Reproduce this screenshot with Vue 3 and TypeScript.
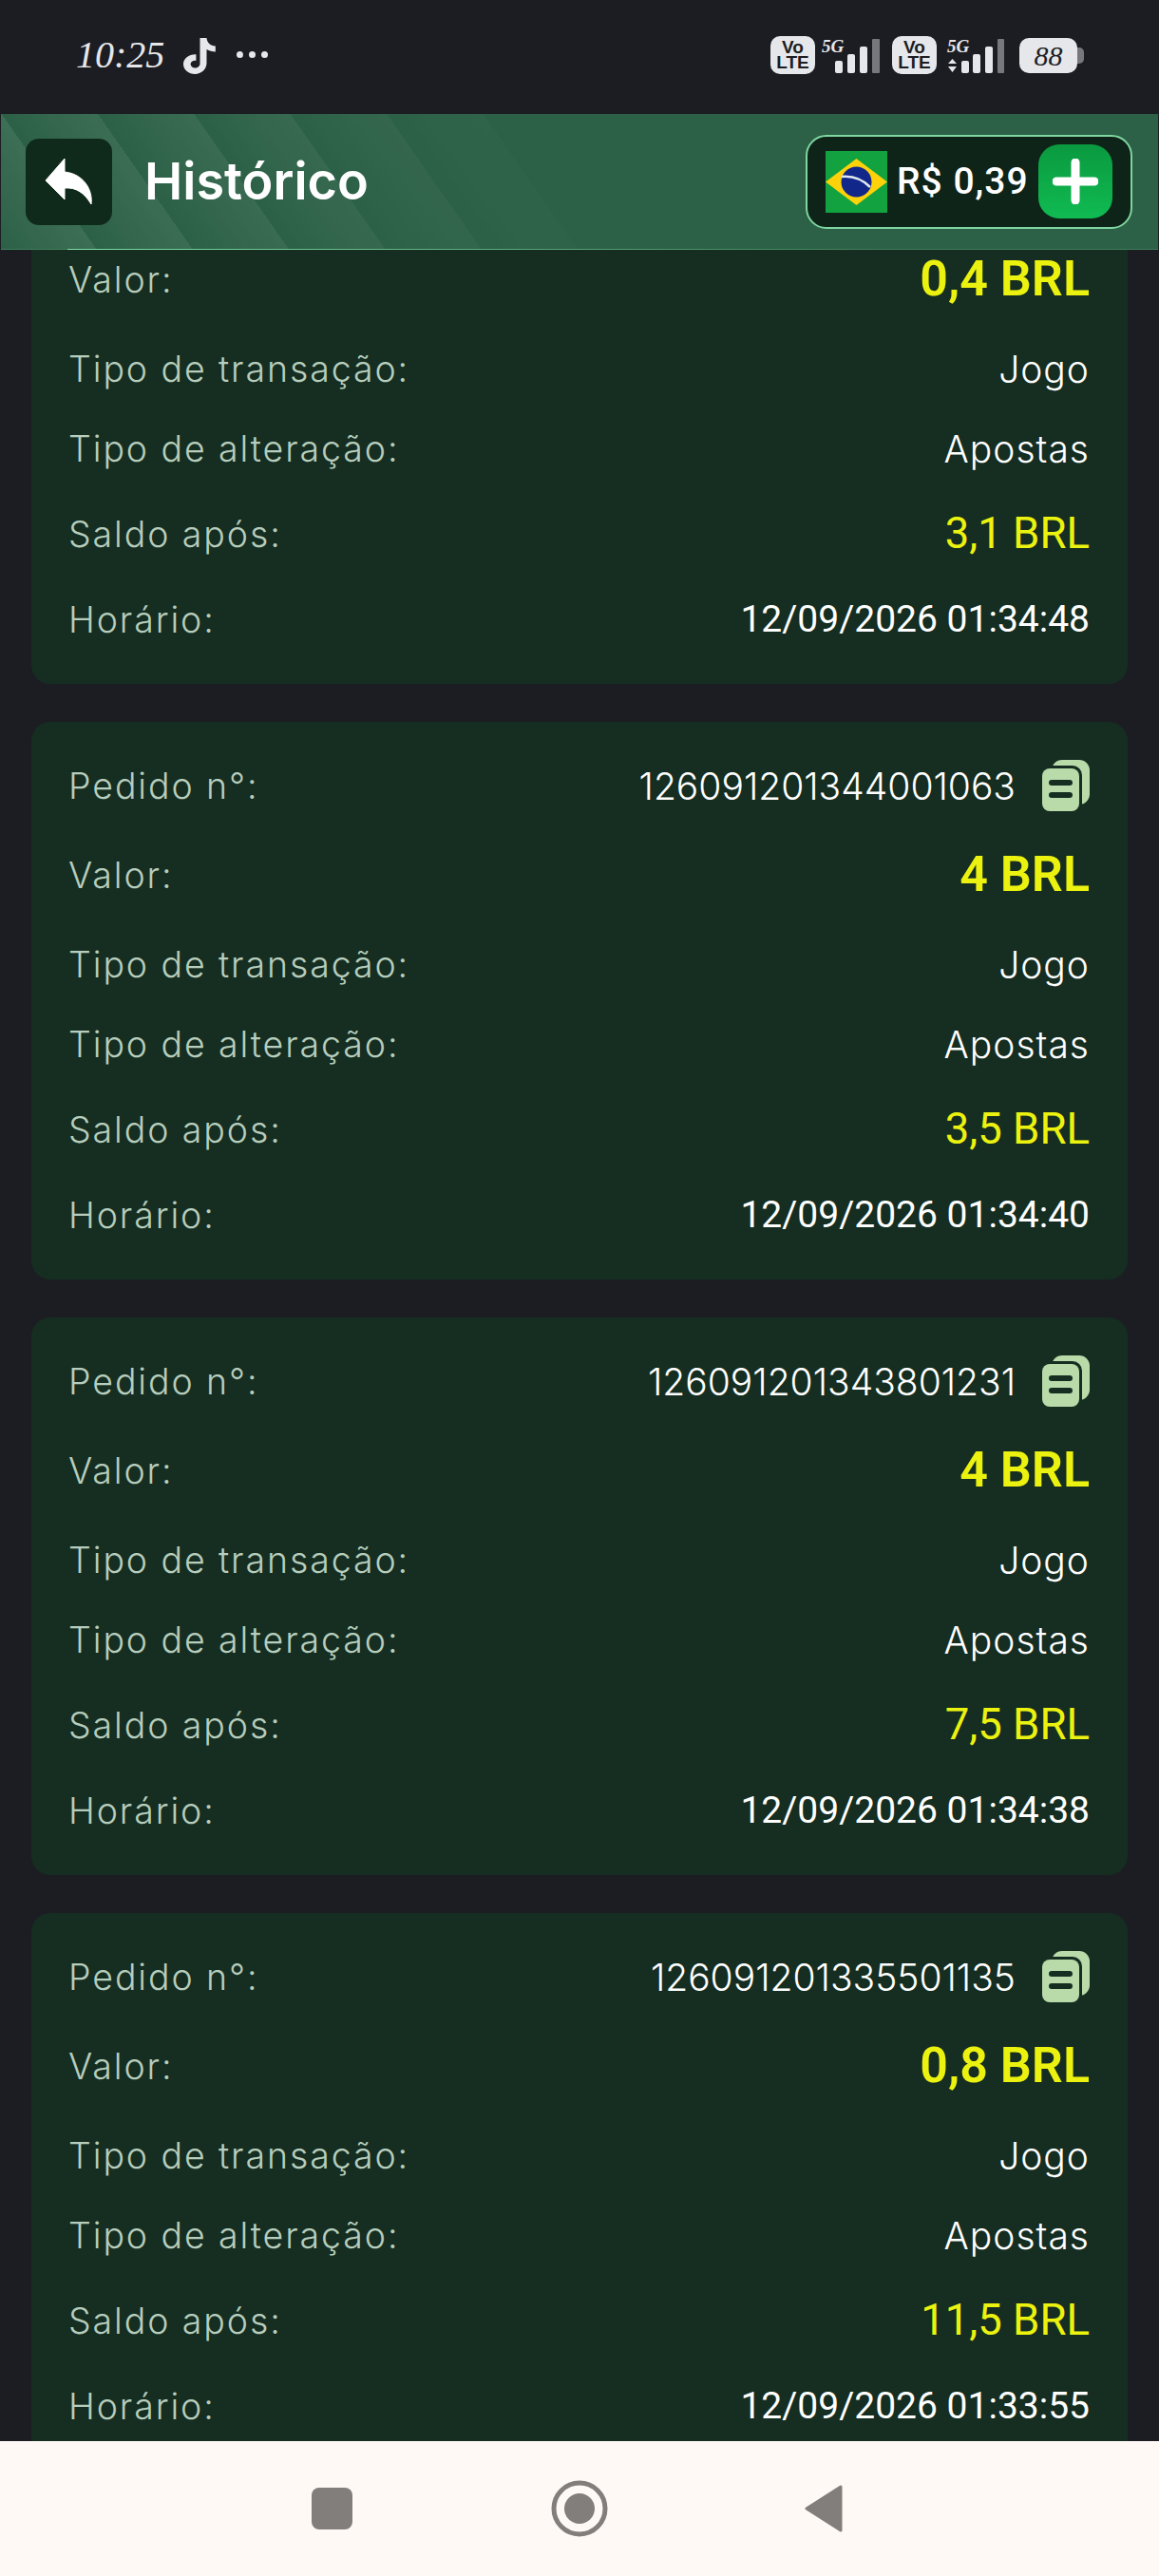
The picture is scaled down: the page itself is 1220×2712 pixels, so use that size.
<script setup lang="ts">
interface Order {
  id?: string
  value: string
  balance: string
  time: string
}
const orders: Order[] = [
  { id: '126091201344801064', value: '0,4 BRL', balance: '3,1 BRL', time: '12/09/2026 01:34:48' },
  { id: '126091201344001063', value: '4 BRL', balance: '3,5 BRL', time: '12/09/2026 01:34:40' },
  { id: '126091201343801231', value: '4 BRL', balance: '7,5 BRL', time: '12/09/2026 01:34:38' },
  { id: '126091201335501135', value: '0,8 BRL', balance: '11,5 BRL', time: '12/09/2026 01:33:55' },
]
</script>

<template>
  <div class="phone">
    <div class="status">
      <div class="status-left">
        <span class="clock">10:25</span>
        <svg class="tiktok" width="35" height="40" viewBox="0 0 30 40" preserveAspectRatio="none"><path d="M15 1h6c.4 5 3.300 8 8 8.500v6c-3 0-5.700-.9-8-2.500v14.500C21 34 16 39 10.500 39S0 34.500 0 28.500 5 18 11.500 18.300v6.500c-2.500-.5-5 1.200-5 3.800 0 2.300 1.800 4 4 4 2.500 0 4.500-2 4.500-4.600z" fill="#e6e7ea"/></svg>
        <span class="dots"><i></i><i></i><i></i></span>
      </div>
      <div class="status-right">
        <span class="volte">Vo<br />LTE</span>
        <svg class="signal" width="62" height="40" viewBox="0 0 62 40">
          <text x="0" y="15" class="fiveg">5G</text>
          <rect x="14" y="24" width="8" height="13" rx="2" fill="#e6e7ea" /><rect x="27" y="17" width="8" height="20" rx="2" fill="#e6e7ea" /><rect x="40" y="9" width="8" height="28" rx="2" fill="#e6e7ea" /><rect x="53" y="1" width="8" height="36" rx="1" fill="#77787c" />
        </svg>
        <span class="volte second">Vo<br />LTE</span>
        <svg class="signal wide" width="62" height="40" viewBox="0 0 62 40">
          <text x="0" y="15" class="fiveg">5G</text>
          <path d="M1 27l4.500-5 4.500 5zM1 30h9l-4.500 6z" fill="#e6e7ea" />
          <rect x="15" y="24" width="8" height="13" rx="2" fill="#e6e7ea" /><rect x="27" y="17" width="8" height="20" rx="2" fill="#e6e7ea" /><rect x="40" y="9" width="8" height="28" rx="2" fill="#e6e7ea" /><rect x="53" y="1" width="7" height="36" rx="1" fill="#77787c" />
        </svg>
        <span class="battery">88</span>
      </div>
    </div>

    <header class="bar">
      <div class="bar-left">
        <button class="back">
          <svg width="51" height="50" viewBox="0 0 51 50"><path d="M21 1L1 24l20 20V32c12-1 21 5 28 17 2-15-8-32-28-34z" fill="#fff" stroke="#fff" stroke-width="1" stroke-linejoin="round" /></svg>
        </button>
        <h1>Histórico</h1>
      </div>
      <div class="wallet">
        <svg class="flag" width="65" height="65" viewBox="0 0 65 65">
          <rect width="65" height="65" fill="#12a23f" />
          <path d="M32.500 8L65 32.500 32.500 57 0 32.500z" fill="#fdd20a" />
          <circle cx="32.500" cy="32.500" r="16" fill="#12278a" />
          <path d="M17 27c11-1 22 3 30 11" fill="none" stroke="#dfe8f0" stroke-width="2.500" />
        </svg>
        <span class="amount">R$ 0,39</span>
        <span class="plus">
          <svg width="48" height="48" viewBox="0 0 48 48"><path d="M24 4v40M4 24h40" stroke="#fff" stroke-width="9" stroke-linecap="round" /></svg>
        </span>
      </div>
    </header>

    <main class="scroller">
      <div class="list">
        <article v-for="o in orders" :key="o.id" class="card">
          <div class="row r1">
            <span class="label">Pedido n°:</span>
            <span class="val id">{{ o.id }}
              <svg class="copy" width="50" height="54" viewBox="0 0 50 54">
                <rect x="10" y="0" width="40" height="47" rx="11" fill="#b9dba9" />
                <rect x="-4" y="6" width="46" height="52" rx="10" fill="#152e21" />
                <rect x="0" y="9" width="39" height="45" rx="8" fill="#b9dba9" />
                <path d="M10 24h19M10 37h19" stroke="#152e21" stroke-width="6" stroke-linecap="round" />
              </svg>
            </span>
          </div>
          <div class="row r2"><span class="label">Valor:</span><span class="val big">{{ o.value }}</span></div>
          <div class="row r3"><span class="label">Tipo de transação:</span><span class="val">Jogo</span></div>
          <div class="row r4"><span class="label">Tipo de alteração:</span><span class="val">Apostas</span></div>
          <div class="row r5"><span class="label">Saldo após:</span><span class="val yellow">{{ o.balance }}</span></div>
          <div class="row r6"><span class="label">Horário:</span><span class="val date">{{ o.time }}</span></div>
        </article>
      </div>
    </main>

    <nav class="nav">
      <span class="n-square"></span>
      <svg class="n-circle" width="60" height="60" viewBox="0 0 60 60"><circle cx="30" cy="30" r="27" fill="none" stroke="#817e7c" stroke-width="5" /><circle cx="30" cy="30" r="16" fill="#817e7c" /></svg>
      <svg class="n-back" width="40" height="50" viewBox="0 0 40 50"><path d="M38 2L2 25l36 23z" fill="#817e7c" stroke="#817e7c" stroke-width="3" stroke-linejoin="round" /></svg>
    </nav>
  </div>
</template>

<style>
html, body { margin: 0; background: #1c1d22; }
</style>

<style scoped>
.phone {
  width: 1220px;
  height: 2712px;
  display: flex;
  flex-direction: column;
  overflow: hidden;
  background: #1c1d22;
  font-family: "Inter", "Liberation Sans", sans-serif;
}
.status {
  height: 120px;
  flex: none;
  display: flex;
  justify-content: space-between;
  padding: 38px 86px 0 80px;
  box-sizing: border-box;
}
.status-left, .status-right { display: flex; align-items: flex-start; }
.clock {
  font-family: "Liberation Serif", serif;
  font-style: italic;
  font-size: 40px;
  line-height: 40px;
  color: #e6e7ea;
  width: 113px;
}
.tiktok { margin-top: 1px; }
.dots { display: flex; gap: 6px; margin: 16px 0 0 21px; }
.dots i { width: 7px; height: 7px; border-radius: 50%; background: #e6e7ea; }
.volte {
  width: 47px;
  height: 40px;
  border-radius: 10px;
  background: #e6e7ea;
  color: #1c1d22;
  font: 700 19px/16px "Liberation Sans", sans-serif;
  text-align: center;
  padding-top: 4px;
  box-sizing: border-box;
}
.second { margin-left: 12px; }
.signal { margin-left: 7px; margin-top: 2px; overflow: visible; }
.signal.wide { margin-left: 11px; }
.fiveg { font: italic 700 19px "Liberation Serif", serif; fill: #e6e7ea; }
.battery {
  position: relative;
  width: 61px;
  height: 37px;
  margin: 2px 0 0 14px;
  background: #e6e7ea;
  border-radius: 10px;
  text-align: center;
  color: #1c1d22;
  font: italic 400 30px/37px "Liberation Serif", serif;
}
.battery::after {
  content: "";
  position: absolute;
  left: 61px;
  top: 10px;
  width: 7px;
  height: 17px;
  background: #77787c;
  border-radius: 0 5px 5px 0;
}
.bar {
  position: relative;
  height: 143px;
  flex: none;
  margin: 0 1px;
  box-sizing: border-box;
  padding: 0 27px 0 26px;
  display: flex;
  align-items: center;
  justify-content: space-between;
  border-bottom: 1px solid #3f7e5b;
  background: #2c6147;
}
.bar::before {
  content: "";
  position: absolute;
  inset: 0;
  background: repeating-linear-gradient(55deg, rgba(255,255,255,0) 0, rgba(255,255,255,.09) 82px, rgba(255,255,255,0) 82px, rgba(255,255,255,0) 83px);
  -webkit-mask-image: linear-gradient(65deg, #000 0, rgba(0,0,0,.7) 280px, transparent 620px);
  mask-image: linear-gradient(65deg, #000 0, rgba(0,0,0,.7) 280px, transparent 620px);
}
.bar::after {
  content: "";
  position: absolute;
  left: 70px;
  right: 300px;
  bottom: -1px;
  height: 1px;
  background: linear-gradient(90deg, #7fe0a4, #3f7e5b);
}
.bar-left, .wallet { position: relative; z-index: 1; }
.bar-left { display: flex; align-items: center; gap: 34px; }
.back {
  width: 91px;
  height: 91px;
  border: 0;
  padding: 0;
  border-radius: 14px;
  background: #0f2a1b;
  display: flex;
  align-items: center;
  justify-content: center;
}
h1 {
  margin: 0;
  color: #fff;
  font: 600 54px/1.2 "Inter", sans-serif;
}
.wallet {
  width: 344px;
  height: 99px;
  box-sizing: border-box;
  border: 2px solid #7fd6a0;
  border-radius: 22px;
  background: #0f2419;
  display: flex;
  align-items: center;
  padding: 0 19px;
}
.amount {
  font: 500 39px/1.2 "Roboto", sans-serif;
  color: #fff;
  margin-left: 10px;
  letter-spacing: 1px;
  white-space: nowrap;
}
.plus {
  width: 78px;
  height: 78px;
  flex: none;
  margin-left: auto;
  border-radius: 22px;
  background: linear-gradient(180deg, #0a993f, #10bb52);
  display: flex;
  align-items: center;
  justify-content: center;
}
.scroller { flex: 1; min-height: 0; overflow: hidden; }
.list {
  margin-top: -130px;
  padding: 0 33px;
  display: flex;
  flex-direction: column;
  gap: 40px;
}
.card {
  height: 587px;
  box-sizing: border-box;
  background: #152e21;
  border-radius: 20px;
  padding: 23px 40px 26px 39px;
  flex: none;
}
.row { display: flex; justify-content: space-between; align-items: center; }
.r1 { height: 88px; }
.r2 { height: 100px; }
.r3 { height: 89px; }
.r4 { height: 79px; }
.r5 { height: 100px; }
.r6 { height: 80px; }
.label {
  color: #b7cdbd;
  font-size: 37.5px;
  font-weight: 300;
  letter-spacing: 1.9px;
}
.val {
  color: #fff;
  font-size: 39px;
  font-weight: 300;
  letter-spacing: 1px;
  display: flex;
  align-items: center;
}
.id { letter-spacing: 0; }
.copy { margin-left: 28px; }
.big {
  font: 600 52px/1.1 "Roboto", sans-serif;
  letter-spacing: 0;
  color: #ecf20f;
}
.yellow {
  font: 400 45.5px/1.1 "Roboto", sans-serif;
  letter-spacing: 0;
  color: #ecf20f;
}
.date { font: 400 39px/1.1 "Roboto", sans-serif; letter-spacing: 0; }
.nav {
  height: 142px;
  flex: none;
  background: #fff9f5;
  display: flex;
  align-items: center;
  padding-left: 328px;
}
.n-square { width: 43px; height: 44px; border-radius: 8px; background: #817e7c; }
.n-circle { margin-left: 209px; }
.n-back { margin-left: 207px; }
</style>
